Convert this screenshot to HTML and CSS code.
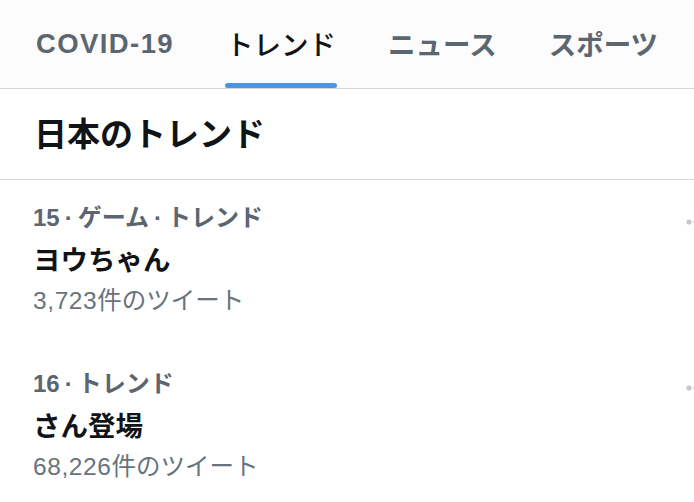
FILE: index.html
```html
<!DOCTYPE html>
<html lang="ja">
<head>
  <meta charset="UTF-8" />
  <title>トレンド</title>
  <meta name="viewport" content="width=device-width, initial-scale=1.0" />
  <link rel="stylesheet" href="styles.css">
</head>
<body>
  <nav class="tabs">
    <div class="tab"><span class="tab-label latin">COVID-19</span></div>
    <div class="tab active"><span class="tab-label">トレンド</span></div>
    <div class="tab"><span class="tab-label">ニュース</span></div>
    <div class="tab"><span class="tab-label">スポーツ</span></div>
  </nav>

  <div class="section-title">
    <h2>日本のトレンド</h2>
  </div>

  <ul class="trends">
    <li class="trend">
      <div class="trend-body">
        <div class="trend-meta">15<span class="sep">·</span>ゲーム<span class="sep">·</span>トレンド</div>
        <div class="trend-name">ヨウちゃん</div>
        <div class="trend-count"><span class="num">3,723</span>件のツイート</div>
      </div>
      <svg class="more" width="20" height="6" viewBox="0 0 20 6">
        <circle cx="3" cy="3" r="2.6" />
        <circle cx="10" cy="3" r="2.6" />
        <circle cx="17" cy="3" r="2.6" />
      </svg>
    </li>
    <li class="trend">
      <div class="trend-body">
        <div class="trend-meta">16<span class="sep">·</span>トレンド</div>
        <div class="trend-name">さん登場</div>
        <div class="trend-count"><span class="num">68,226</span>件のツイート</div>
      </div>
      <svg class="more" width="20" height="6" viewBox="0 0 20 6">
        <circle cx="3" cy="3" r="2.6" />
        <circle cx="10" cy="3" r="2.6" />
        <circle cx="17" cy="3" r="2.6" />
      </svg>
    </li>
  </ul>
</body>
</html>
```

FILE: styles.css
```css
:root {
  --text-dark: #111417;
  --text-gray: #5b6670;
  --count-gray: #68737c;
  --border: #d3d5d8;
  --blue: #4a96e5;
}

* {
  box-sizing: border-box;
}

body {
  font-family: 'Liberation Sans', 'Noto Sans CJK JP', sans-serif;
  margin: 0;
  padding: 0;
  background: white;
  color: var(--text-dark);
  overflow-x: hidden;
}

.tabs {
  display: flex;
  gap: 50px;
  height: 89px;
  padding-left: 35px;
  background-color: #fcfcfc;
  border-bottom: 1px solid var(--border);
}

.tab {
  display: flex;
  flex-direction: column;
  white-space: nowrap;
}

.tab-label {
  flex: 1;
  display: flex;
  align-items: center;
  padding: 3px 1px 0;
  font-size: 27.5px;
  font-weight: 700;
  color: var(--text-gray);
}

.tab-label.latin {
  letter-spacing: 1.4px;
  padding-top: 4px;
}

.tab::after {
  content: '';
  display: block;
  height: 5px;
  border-radius: 3px;
  background: transparent;
}

.tab.active .tab-label {
  color: var(--text-dark);
  font-weight: 500;
}

.tab.active::after {
  background: var(--blue);
}

.section-title {
  padding: 24px 34px 22px;
  border-bottom: 1px solid var(--border);
}

.section-title h2 {
  margin: 0;
  font-size: 33px;
  line-height: 44px;
  font-weight: 700;
}

.trends {
  list-style: none;
  margin: 0;
  padding: 0;
}

.trend {
  display: flex;
  justify-content: space-between;
  align-items: flex-start;
  padding: 17px 0 27px 33px;
}

.trend-meta {
  font-size: 24px;
  line-height: 42px;
  font-weight: 600;
  color: var(--text-gray);
}

.sep {
  margin: 0 5px;
}

.trend-name {
  font-size: 27.5px;
  line-height: 44px;
  font-weight: 700;
}

.trend-count {
  font-size: 24.5px;
  line-height: 36px;
  color: var(--count-gray);
}

.trend-count .num {
  letter-spacing: 0.6px;
}

.more {
  flex-shrink: 0;
  margin-top: 22px;
  margin-right: -12px;
  fill: #c3c8cd;
}
```
